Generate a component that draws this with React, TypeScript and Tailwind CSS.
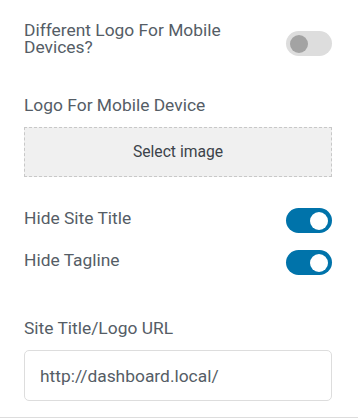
import React, { useState } from 'react';

interface ToggleProps {
  on: boolean;
  onChange: () => void;
}

const Toggle: React.FC<ToggleProps> = ({ on, onChange }) => (
  <button
    onClick={onChange}
    className={`flex h-[25px] w-[46px] flex-shrink-0 items-center rounded-full px-[4px] ${
      on ? 'justify-end bg-[#0073aa]' : 'justify-start bg-[#dddddd]'
    }`}
  >
    <span className={`block h-[18px] w-[18px] rounded-full ${on ? 'bg-white' : 'bg-[#a3a3a3]'}`} />
  </button>
);

const App: React.FC = () => {
  const [mobileLogo, setMobileLogo] = useState(false);
  const [hideTitle, setHideTitle] = useState(true);
  const [hideTagline, setHideTagline] = useState(true);

  return (
    <div className="box-border h-[418px] w-[358px] border-b border-[#dddddd] bg-white pl-6 pr-[26px] font-['Roboto',sans-serif] text-[17.4px] text-[#555d66]">
      <div className="flex items-start justify-between pt-[22px]">
        <span className="max-w-[230px] leading-[17px]">Different Logo For Mobile Devices?</span>
        <div className="mt-[9px]">
          <Toggle on={mobileLogo} onChange={() => setMobileLogo(v => !v)} />
        </div>
      </div>

      <div className="mt-[39px] leading-[20px]">Logo For Mobile Device</div>
      <button className="mt-[12px] flex h-[50px] w-full items-center justify-center border border-dashed border-[#c8c8c8] bg-[#f0f0f0] text-[15.7px] text-[#3c434a]">
        Select image
      </button>

      <div className="mt-[31px] flex items-start justify-between">
        <span className="leading-[20px]">Hide Site Title</span>
        <Toggle on={hideTitle} onChange={() => setHideTitle(v => !v)} />
      </div>
      <div className="mt-[17px] flex items-start justify-between">
        <span className="leading-[20px]">Hide Tagline</span>
        <Toggle on={hideTagline} onChange={() => setHideTagline(v => !v)} />
      </div>

      <div className="mt-[43px] leading-[20px]">Site Title/Logo URL</div>
      <input
        type="text"
        defaultValue="http://dashboard.local/"
        className="mt-[12px] box-border h-[51px] w-full rounded-[5px] border border-[#dddddd] bg-white px-[15px] font-['Roboto',sans-serif] text-[17.4px] text-[#555d66] outline-none"
      />
    </div>
  );
};

export default App;
